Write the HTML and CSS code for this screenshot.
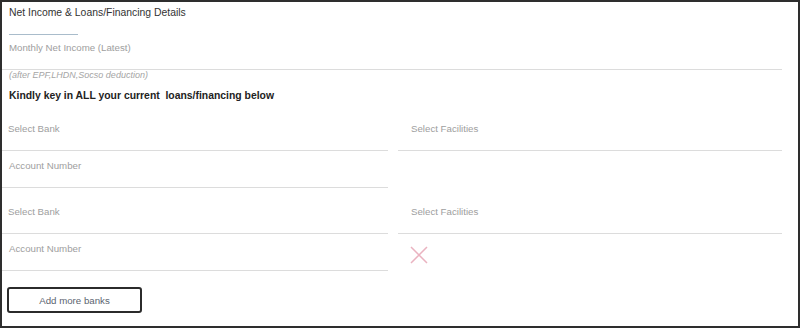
FILE: index.html
```html
<!DOCTYPE html>
<html lang="en">
<head>
    <meta charset="UTF-8">
    <meta name="viewport" content="width=device-width, initial-scale=1.0">
    <title>Net Income &amp; Loans/Financing Details</title>
    <link rel="stylesheet" href="styles.css">
</head>
<body>
    <div id="container">
        <div class="section-title">Net Income &amp; Loans/Financing Details</div>
        <div class="title-accent"></div>

        <div class="field income-field">Monthly Net Income (Latest)</div>
        <div class="note">(after EPF,LHDN,Socso deduction)</div>

        <div class="heading">Kindly key in ALL your current&nbsp; loans/financing below</div>

        <!-- Bank 1 -->
        <div class="bank-group">
            <div class="field select-field">Select Bank</div>
            <div class="field select-field">Select Facilities</div>
            <div class="field account-field">Account Number</div>
            <div class="cell"></div>
        </div>

        <!-- Bank 2 -->
        <div class="bank-group">
            <div class="field select-field">Select Bank</div>
            <div class="field select-field">Select Facilities</div>
            <div class="field account-field">Account Number</div>
            <div class="cell remove-cell">
                <span class="remove-button">
                    <svg width="18" height="18" viewBox="0 0 18 18">
                        <path d="M1 1 L17 17 M17 1 L1 17" stroke="#eab3c0" stroke-width="1.5" fill="none"/>
                    </svg>
                </span>
            </div>
        </div>

        <button class="add-button">Add more banks</button>
    </div>
</body>
</html>
```

FILE: styles.css
```css
body {
    margin: 0;
    font-family: "Liberation Sans", Arial, sans-serif;
    background-color: #fff;
}

#container {
    width: 800px;
    height: 328px;
    box-sizing: border-box;
    border: 2px solid #2e2e2e;
    overflow: hidden;
}

.section-title {
    padding: 4px 7px 0;
    font-size: 10.4px;
    line-height: 14px;
    color: #333;
}

.title-accent {
    width: 69px;
    height: 1px;
    margin: 14px 0 0 7px;
    background-color: #a9bccb;
}

.field {
    font-size: 9.7px;
    line-height: 14px;
    color: #9e9e9e;
    border-bottom: 1px solid #dcdcdc;
}

.income-field {
    margin: 6px 16px 0 0;
    padding: 0 7px 14px;
}

.note {
    padding: 0 7px;
    font-size: 9px;
    line-height: 11px;
    font-style: italic;
    color: #a5a5a5;
}

.heading {
    margin-top: 8px;
    padding: 0 7px;
    font-size: 10.4px;
    line-height: 14px;
    font-weight: bold;
    color: #222;
}

.bank-group {
    display: grid;
    grid-template-columns: 386px 384px;
    column-gap: 10px;
    margin-top: 2px;
}

.bank-group + .bank-group {
    margin-top: 0;
}

.select-field {
    padding: 17px 6px 14px;
}

.select-field:nth-child(2) {
    padding-left: 13px;
}

.account-field {
    padding: 8px 7px 14px;
}

.remove-cell {
    padding: 12px 0 0 12px;
}

.remove-button {
    display: inline-block;
    width: 18px;
    height: 18px;
    cursor: pointer;
}

.add-button {
    display: block;
    width: 135px;
    height: 26px;
    margin: 16px 0 0 5px;
    padding: 0;
    background-color: #fff;
    border: 2px solid #2b2b2b;
    border-radius: 3px;
    font-family: "Liberation Sans", Arial, sans-serif;
    font-size: 9.7px;
    color: #5b6470;
    cursor: pointer;
}
```
